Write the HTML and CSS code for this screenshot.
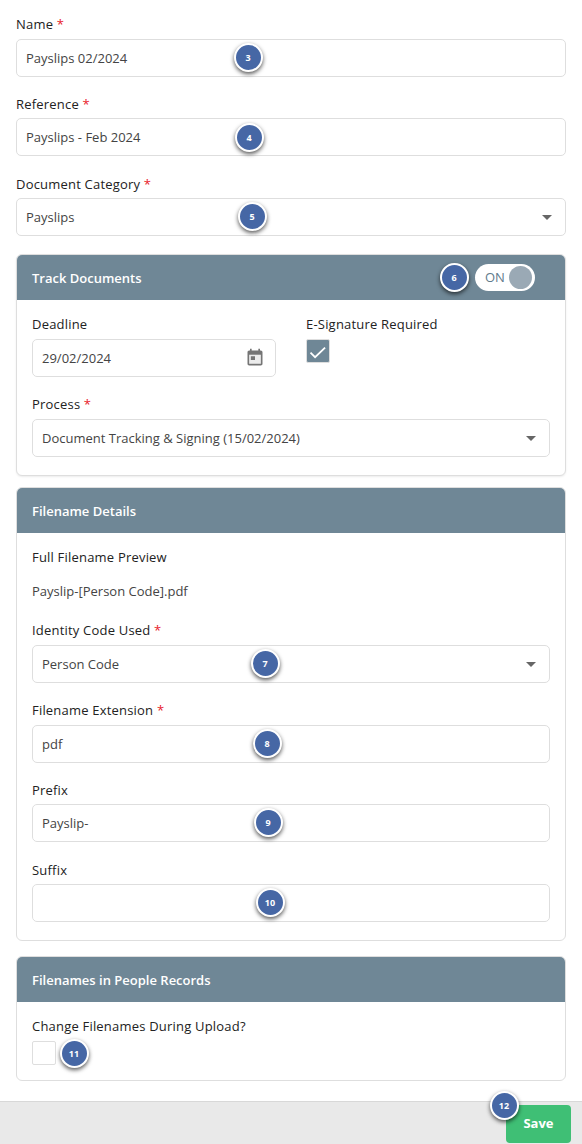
FILE: index.html
```html
<!DOCTYPE html>
<html lang="en">
<head>
<meta charset="utf-8">
<title>Document Batch</title>
<link rel="stylesheet" href="styles.css">
</head>
<body>
<div class="page">
  <main class="content">
    <div class="field"><div class="label">Name <span class="req">*</span></div><div class="control">Payslips 02/2024</div></div>
    <div class="field"><div class="label">Reference <span class="req">*</span></div><div class="control">Payslips - Feb 2024</div></div>
    <div class="field"><div class="label">Document Category <span class="req">*</span></div><div class="control select">Payslips<span class="caret"></span></div></div>

    <section class="panel panel-track">
      <header class="panel-head"><span>Track Documents</span>
        <div class="toggle"><span>ON</span><i class="knob"></i></div>
      </header>
      <div class="panel-body">
        <div class="cols">
          <div class="field"><div class="label">Deadline</div>
            <div class="control select">29/02/2024
              <svg class="cal" viewBox="0 0 24 24"><path fill="#757575" opacity=".14" d="M5 8h14v11H5z"/><path fill="#757575" d="M19 3h-1V1h-2v2H8V1H6v2H5c-1.1 0-2 .9-2 2v14c0 1.1.9 2 2 2h14c1.1 0 2-.9 2-2V5c0-1.1-.9-2-2-2zm0 16H5V8h14v11z"/><path fill="#757575" d="M7 10h5v4.5H7z"/></svg>
            </div>
          </div>
          <div class="field"><div class="label">E-Signature Required</div>
            <div class="check on"><svg viewBox="0 0 24 24"><path fill="none" stroke="#fff" stroke-width="2.2" d="M3 14l5.5 5.5L20.5 8"/></svg></div>
          </div>
        </div>
        <div class="field"><div class="label">Process <span class="req">*</span></div><div class="control select">Document Tracking &amp; Signing (15/02/2024)<span class="caret"></span></div></div>
      </div>
    </section>

    <section class="panel panel-file">
      <header class="panel-head"><span>Filename Details</span></header>
      <div class="panel-body">
        <div class="label preview-label">Full Filename Preview</div>
        <div class="preview-value">Payslip-[Person Code].pdf</div>
        <div class="field"><div class="label">Identity Code Used <span class="req">*</span></div><div class="control select">Person Code<span class="caret"></span></div></div>
        <div class="field"><div class="label">Filename Extension <span class="req">*</span></div><div class="control">pdf</div></div>
        <div class="field"><div class="label">Prefix</div><div class="control">Payslip-</div></div>
        <div class="field"><div class="label">Suffix</div><div class="control"></div></div>
      </div>
    </section>

    <section class="panel panel-people">
      <header class="panel-head"><span>Filenames in People Records</span></header>
      <div class="panel-body people-body">
        <div class="label">Change Filenames During Upload?</div>
        <div class="check"></div>
      </div>
    </section>
  </main>

  <footer class="footer"><button class="save">Save</button></footer>

  <div class="badge b3">3</div>
  <div class="badge b4">4</div>
  <div class="badge b5">5</div>
  <div class="badge b6">6</div>
  <div class="badge b7">7</div>
  <div class="badge b8">8</div>
  <div class="badge b9">9</div>
  <div class="badge b10">10</div>
  <div class="badge b11">11</div>
  <div class="badge b12">12</div>
</div>
</body>
</html>
```
FILE: styles.css
```css
* { box-sizing: border-box; }
html, body { margin: 0; padding: 0; }
body {
  font-family: "Open Sans", sans-serif;
  font-size: 13px;
  line-height: 19.5px;
  color: #444;
  background: #fff;
}
.page {
  position: relative;
  width: 582px;
  height: 1144px;
  overflow: hidden;
  display: flex;
  flex-direction: column;
}
.content {
  flex: 1;
  padding: 14.3px 16px 0;
}
.field { margin-bottom: 17.3px; }
.label {
  color: #222;
  font-weight: 500;
  padding-top: 1px;
  margin-bottom: 3.9px;
  letter-spacing: 0.2px;
}
.req { color: #e8202a; }
.control {
  position: relative;
  height: 38px;
  border: 1px solid #dedede;
  border-radius: 5px;
  background: #fff;
  padding: 9px 9px 0;
  color: #444;
}
.caret {
  position: absolute;
  right: 13px;
  top: 16px;
  width: 0;
  height: 0;
  border-left: 5px solid transparent;
  border-right: 5px solid transparent;
  border-top: 5px solid #666;
}
.cal {
  position: absolute;
  right: 10px;
  top: 8px;
  width: 20px;
  height: 20px;
}
.panel {
  border: 1px solid #dedede;
  border-radius: 6px;
  overflow: hidden;
  background: #fff;
}
.panel-track { margin-top: 18px; box-shadow: 0 1px 2px rgba(0,0,0,.08); }
.panel-file { margin-top: 11px; }
.panel-people { margin-top: 15px; }
.panel-head {
  height: 45px;
  background: #6f8796;
  color: #fff;
  font-weight: 600;
  padding: 2px 15px 0;
  display: flex;
  align-items: center;
  justify-content: space-between;
}
.panel-body { padding: 14px 15px 1px; }
.panel-track .panel-body { padding-top: 14.2px; }
.cols {
  display: grid;
  grid-template-columns: 244px 244px;
  column-gap: 30px;
  margin-bottom: 0.3px;
}
.check {
  width: 24px;
  height: 24px;
  border: 1px solid #dedede;
  border-radius: 2px;
  background: #fff;
}
.check.on { background: #6f8796; padding: 1px; }
.check svg { display: block; width: 20px; height: 20px; }
.toggle {
  position: relative;
  width: 60px;
  height: 27px;
  margin: -3px 15px 0 0;
  border-radius: 14px;
  background: #fff;
  color: #5f7a8c;
  font-weight: 500;
  font-size: 13px;
  line-height: 27px;
  padding-left: 10px;
}
.knob {
  position: absolute;
  right: 3px;
  top: 2px;
  width: 23px;
  height: 23px;
  border-radius: 50%;
  background: #9aa9b5;
}
.preview-label { margin-bottom: 13.1px; }
.preview-value { padding-top: 1px; margin-bottom: 19.45px; }
.panel-body.people-body { padding: 13.7px 15px 15px; }
.people-body .label { margin-bottom: 4.7px; }
.footer {
  height: 43px;
  background: #e9e9e9;
  border-top: 1px solid #d8d8d8;
  display: flex;
  justify-content: flex-end;
  align-items: flex-start;
  padding: 3px 11px 0 0;
}
.save {
  width: 65px;
  height: 38px;
  border: 0;
  border-radius: 4px;
  background: #3fbf75;
  color: #fff;
  font: 700 13px/19.5px "Open Sans", sans-serif;
}
.badge {
  position: absolute;
  width: 29px;
  height: 29px;
  margin: -14.5px 0 0 -14.5px;
  border: 2px solid #fff;
  border-radius: 50%;
  background: #4667a5;
  color: #fff;
  font-size: 9px;
  font-weight: 700;
  line-height: 25px;
  text-align: center;
  box-shadow: 0 2px 4px rgba(0,0,0,.65);
}
.b3 { left: 248px; top: 57px; }
.b4 { left: 249px; top: 137px; }
.b5 { left: 252px; top: 216px; }
.b6 { left: 454px; top: 277px; }
.b7 { left: 265px; top: 663px; }
.b8 { left: 267px; top: 743px; }
.b9 { left: 268px; top: 822px; }
.b10 { left: 270px; top: 902px; }
.b11 { left: 74px; top: 1053px; }
.b12 { left: 504px; top: 1105px; }
```
